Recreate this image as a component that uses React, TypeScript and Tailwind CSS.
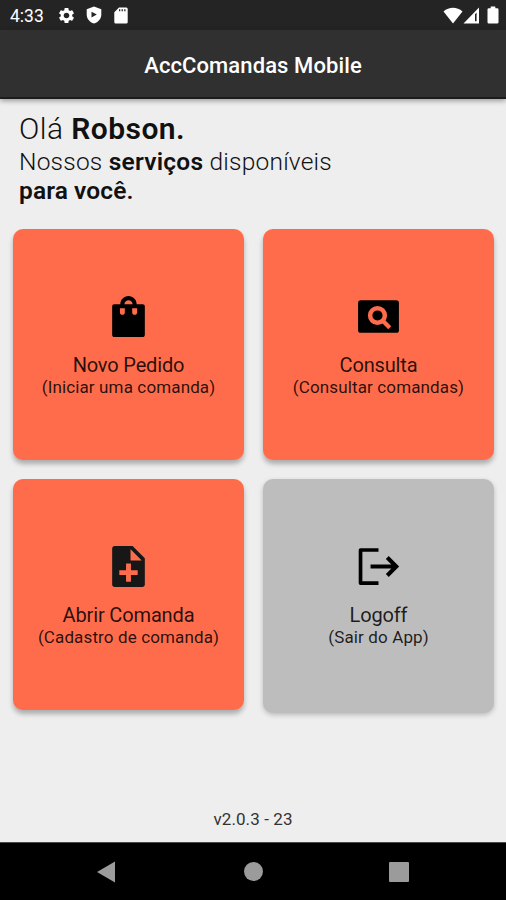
import React from 'react';

interface ServiceCardProps {
  title: string;
  subtitle: string;
  variant?: 'primary' | 'muted';
  children: React.ReactNode;
}

function ServiceCard({ title, subtitle, variant = 'primary', children }: ServiceCardProps) {
  return (
    <button
      type="button"
      className={`w-full rounded-[10px] flex flex-col items-center pt-[63.5px] text-[#000000d9] cursor-pointer ${
        variant === 'primary'
          ? 'h-[231.5px] bg-[#ff6c4b] shadow-[0_4px_5px_rgba(0,0,0,0.28)]'
          : 'h-[234px] bg-[#bdbdbd] shadow-[0_2px_5px_rgba(0,0,0,0.22)]'
      }`}
    >
      <svg viewBox="0 0 24 24" className="w-[49px] h-[49px]" fill="currentColor">
        {children}
      </svg>
      <span className="mt-[12px] text-[20px] leading-[24px] tracking-[-0.15px] whitespace-nowrap">{title}</span>
      <span className="text-[17px] leading-[21px] tracking-[0.13px] whitespace-nowrap">{subtitle}</span>
    </button>
  );
}

function StatusBar() {
  return (
    <div className="h-[30px] bg-[#242424] flex items-center justify-between pl-[10px] pr-[7px] text-white">
      <div className="flex items-center">
        <span className="w-[35px] text-[17.5px] leading-[30px] mt-[2px]">4:33</span>
        <svg viewBox="0 0 24 24" className="w-[19px] h-[19px] ml-[12px]" fill="currentColor">
          <path d="M19.14 12.94c.04-.3.06-.61.06-.94 0-.32-.02-.64-.07-.94l2.03-1.58c.18-.14.23-.41.12-.61l-1.92-3.32c-.12-.22-.37-.29-.59-.22l-2.39.96c-.5-.38-1.03-.7-1.62-.94l-.36-2.54c-.04-.24-.24-.41-.48-.41h-3.84c-.24 0-.43.17-.47.41l-.36 2.54c-.59.24-1.13.57-1.62.94l-2.39-.96c-.22-.08-.47 0-.59.22L2.74 8.87c-.12.21-.08.47.12.61l2.03 1.58c-.05.3-.09.63-.09.94s.02.64.07.94l-2.03 1.58c-.18.14-.23.41-.12.61l1.92 3.32c.12.22.37.29.59.22l2.39-.96c.5.38 1.03.7 1.62.94l.36 2.54c.05.24.24.41.48.41h3.84c.24 0 .44-.17.47-.41l.36-2.54c.59-.24 1.13-.56 1.62-.94l2.39.96c.22.08.47 0 .59-.22l1.92-3.32c.12-.22.07-.47-.12-.61l-2.01-1.58zM12 15.6c-1.98 0-3.6-1.62-3.6-3.6s1.62-3.6 3.6-3.6 3.6 1.62 3.6 3.6-1.62 3.6-3.6 3.6z" />
        </svg>
        <svg viewBox="0 0 16 18" className="w-[16px] h-[18px] ml-[9.5px]" fill="currentColor" fillRule="evenodd">
          <path d="M8 0.5L15.3 3.2V8.5C15.3 12.8 12.3 16.2 8 17.5C3.7 16.2 0.7 12.8 0.7 8.5V3.2ZM5.5 5.8V11.5L10.8 8.6Z" />
        </svg>
        <svg viewBox="0 0 14 17" className="w-[14px] h-[17px] ml-[12px]" fill="currentColor" fillRule="evenodd">
          <path d="M5 0.5H12.3Q13.7 0.5 13.7 2V15Q13.7 16.5 12.3 16.5H1.7Q0.3 16.5 0.3 15V5.2ZM5 2.2V4.2H6.3V2.2ZM7.6 2.2V4.2H8.9V2.2ZM10.2 2.2V4.2H11.5V2.2Z" />
        </svg>
      </div>
      <div className="flex items-center">
        <svg viewBox="0 0 20 17" className="w-[20px] h-[17px]" fill="currentColor">
          <path d="M0.5 4.5C6-0.5 14-0.5 19.5 4.5L10 16.5Z" />
        </svg>
        <svg viewBox="0 0 17 17" className="w-[17px] h-[17px]" fill="currentColor" fillRule="evenodd">
          <path d="M16 0.5V16.5H0.5ZM12 7.2V14.3H13.6V5.6Z" />
        </svg>
        <svg viewBox="0 0 12 18" className="w-[12px] h-[18px] ml-[7px]" fill="currentColor">
          <path d="M3.7 0.5H8.3V2.3H10.2Q11.5 2.3 11.5 3.6V16.2Q11.5 17.5 10.2 17.5H1.8Q0.5 17.5 0.5 16.2V3.6Q0.5 2.3 1.8 2.3H3.7Z" />
        </svg>
      </div>
    </div>
  );
}

function NavigationBar() {
  return (
    <div className="h-[58px] bg-black border-t border-[#4a4a4a] flex items-center justify-between pl-[97px] pr-[97px] text-[#9b9b9b]">
      <svg viewBox="0 0 18 22" className="w-[18px] h-[22px]" fill="currentColor">
        <path d="M18 0.5V21.5L0 11Z" />
      </svg>
      <div className="w-[19px] h-[19px] ml-[2px] rounded-full bg-[#9b9b9b]" />
      <div className="w-[20px] h-[20px] rounded-[1px] bg-[#9b9b9b]" />
    </div>
  );
}

export default function App() {
  return (
    <div className="w-full h-[900px] flex flex-col bg-[#eeeeee] font-['Roboto',sans-serif] text-[#111111] overflow-hidden">
      <StatusBar />
      <header className="h-[69px] shrink-0 bg-[#303030] border-b-2 border-[#1c1c1c] shadow-[0_2px_5px_rgba(0,0,0,0.35)] flex items-center justify-center">
        <h1 className="text-white text-[22px] leading-[28px] font-medium mt-[4px] tracking-[0.1px] whitespace-nowrap">AccComandas Mobile</h1>
      </header>

      <main className="flex-1 flex flex-col">
        <div className="pl-[19px] pt-[12px] h-[129.5px] whitespace-nowrap">
          <p className="text-[30px] leading-[36px] tracking-[0.45px] font-light">
            Olá <strong className="font-semibold">Robson.</strong>
          </p>
          <p className="text-[24.5px] leading-[29px] tracking-[0.23px] font-light">
            Nossos <strong className="font-semibold">serviços</strong> disponíveis
          </p>
          <p className="text-[24.5px] leading-[29px] tracking-[0.1px] font-semibold">para você.</p>
        </div>

        <div className="grid grid-cols-2 items-start gap-x-[19px] gap-y-[16px] pl-[13px] pr-[12px]">
          <ServiceCard title="Novo Pedido" subtitle="(Iniciar uma comanda)">
            <path fill="#000" d="M19 6h-3c0-2.21-1.79-4-4-4S8 3.79 8 6H5c-.55 0-1 .45-1 1v14c0 .55.45 1 1 1h14c.55 0 1-.45 1-1V7c0-.55-.45-1-1-1zm-8.8 4c0 .6-.5 1.2-1.2 1.2s-1.2-.6-1.2-1.2V8h2.4v2zm1.8-6c1.1 0 2 .9 2 2h-4c0-1.1.9-2 2-2zm4.2 6c0 .6-.5 1.2-1.2 1.2s-1.2-.6-1.2-1.2V8h2.4v2z" />
          </ServiceCard>
          <div className="h-[234px]">
            <ServiceCard title="Consulta" subtitle="(Consultar comandas)">
              <rect x="2" y="4" width="20" height="16" rx="1.3" fill="#000" />
              <circle cx="11.5" cy="11.5" r="3.6" fill="none" stroke="#ff6c4b" strokeWidth="2.2" />
              <path d="M14 14L17.5 17.5" fill="none" stroke="#ff6c4b" strokeWidth="2.1" />
            </ServiceCard>
          </div>
          <ServiceCard title="Abrir Comanda" subtitle="(Cadastro de comanda)">
            <path fill="#171717" d="M14 2H5.2C4.54 2 4 2.54 4 3.2v17.6c0 .66.54 1.2 1.2 1.2h13.6c.66 0 1.2-.54 1.2-1.2V8l-6-6zm2.5 14.2h-3.3v3.3h-2.4v-3.3H7.5v-2.4h3.3v-3.3h2.4v3.3h3.3v2.4zM13 9V3.5L18.5 9H13z" />
          </ServiceCard>
          <ServiceCard title="Logoff" subtitle="(Sair do App)" variant="muted">
            <path
              fill="none"
              stroke="#000"
              strokeWidth="1.8"
              strokeLinejoin="round"
              d="M12 3.9H3.2V20.1H12"
            />
            <path fill="none" stroke="#000" strokeWidth="2" d="M8.1 12H21M16.3 7.6L20.7 12L16.3 16.4" />
          </ServiceCard>
        </div>

        <p className="mt-auto pb-[13px] text-center text-[17px] leading-[20px] tracking-[0.1px] text-[#333333]">v2.0.3 - 23</p>
      </main>

      <NavigationBar />
    </div>
  );
}
